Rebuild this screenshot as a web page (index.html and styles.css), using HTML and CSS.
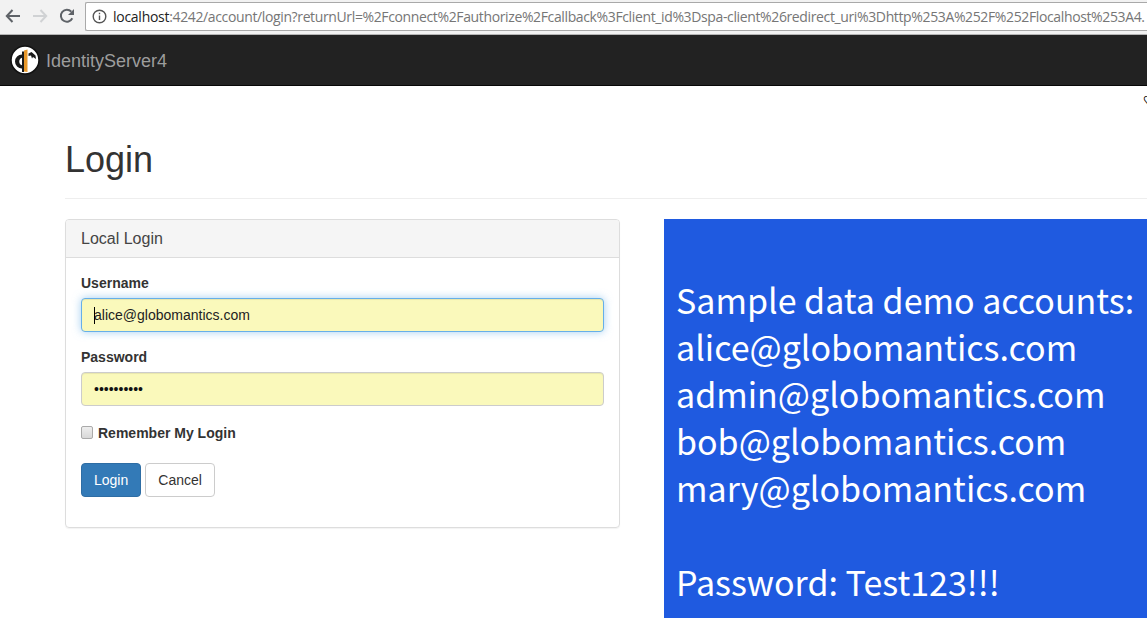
FILE: index.html
```html
<!DOCTYPE html>
<html lang="en">
<head>
<meta charset="utf-8">
<title>Login</title>
<link rel="stylesheet" href="styles.css">
</head>
<body>
<div class="chrome">
  <svg class="nav-icon" width="16" height="14" viewBox="0 0 16 14"><path d="M15 7H2M7.500 1 1.800 7l5.700 6" fill="none" stroke="#5f6368" stroke-width="2"/></svg>
  <svg class="nav-icon" width="16" height="14" viewBox="0 0 16 14"><path d="M1 7h13M8.500 1l5.700 6-5.700 6" fill="none" stroke="#d0d2d4" stroke-width="2"/></svg>
  <svg class="nav-icon" width="16" height="16" viewBox="0 0 16 16"><path d="M13.300 10.300A6 6 0 1 1 12.300 3.600" fill="none" stroke="#5f6368" stroke-width="2"/><path d="M15 1v6H9z" fill="#5f6368"/></svg>
  <div class="omnibox">
    <svg class="info" width="15" height="15" viewBox="0 0 15 15"><circle cx="7.500" cy="7.500" r="6.300" fill="none" stroke="#555" stroke-width="1.400"/><path d="M6.800 6.500h1.400v4.500H6.800zM6.800 3.800h1.400v1.500H6.800z" fill="#555"/></svg>
    <span class="url"><span class="host">localhost</span>:4242/account/login?returnUrl=%2Fconnect%2Fauthorize%2Fcallback%3Fclient_id%3Dspa-client%26redirect_uri%3Dhttp%253A%252F%252Flocalhost%253A4.</span>
  </div>
</div>
<nav class="navbar">
  <svg class="logo" width="30" height="30" viewBox="0 0 30 30"><circle cx="15" cy="15" r="14" fill="#fff" stroke="#111" stroke-width="1.500"/><path d="M14 5.500l3.500-1V27l-3.500-.5z" fill="#e8982a"/><path d="M12 6.500h2V27h-2z" fill="#1a1a1a"/><path d="M12 9.500v3.200a4 4 0 0 0 0 7.600v3.200a7 7 0 0 1 0-14z" fill="#1a1a1a"/><path d="M18.500 8.500l3-1.500 4 3.500.5 3.500-3-2-1 1.500-1-3-2.500.5z" fill="#1a1a1a"/></svg>
  <span class="brand">IdentityServer4</span>
</nav>
<main class="page">
  <div class="heart">♡</div>
  <h1 class="title">Login</h1>
  <div class="columns">
    <section class="panel">
      <h2 class="panel-head">Local Login</h2>
      <form class="panel-body">
        <label class="label" for="u">Username</label>
        <div class="input focus" id="u"><i class="caret"></i>alice@globomantics.com</div>
        <label class="label" for="p">Password</label>
        <div class="input" id="p"><span class="dots">••••••••••</span></div>
        <div class="remember"><span class="check"></span><span>Remember My Login</span></div>
        <div class="buttons"><span class="btn primary">Login</span><span class="btn">Cancel</span></div>
      </form>
    </section>
    <aside class="accounts">
      <p>Sample data demo accounts:</p>
      <p>alice@globomantics.com</p>
      <p>admin@globomantics.com</p>
      <p>bob@globomantics.com</p>
      <p>mary@globomantics.com</p>
      <p class="gap">Password: Test123!!!</p>
    </aside>
  </div>
</main>
</body>
</html>
```
FILE: styles.css
```css
* { box-sizing: border-box; }
html, body { margin: 0; height: 618px; overflow: hidden; background: #fff; }
body { font-family: "Liberation Sans", Arial, sans-serif; color: #333; }
.chrome { height: 35px; background: #f2f2f2; border-bottom: 1px solid #b5b5b5; display: flex; align-items: center; padding: 0 0 2px 5px; gap: 11px; overflow: hidden; }
.nav-icon { flex: none; }
.omnibox { flex: none; width: 1100px; height: 29px; margin-left: -1px; background: #fff; border: 1px solid #a9a9a9; border-right: 0; border-radius: 2px; display: flex; align-items: center; padding-left: 6px; white-space: nowrap; overflow: hidden; }
.info { flex: none; margin-right: 6px; }
.url { font: 14px "Open Sans", sans-serif; color: #767676; letter-spacing: -.37px; }
.host { color: #222; letter-spacing: -.27px; }
.navbar { height: 51px; background: #222; border-bottom: 1px solid #080808; display: flex; align-items: center; padding: 0 0 0 10px; gap: 6px; }
.brand { font-size: 18px; color: #9d9d9d; padding-top: 2px; }
.page { position: relative; padding: 0 0 0 65px; }
.heart { position: absolute; right: -7px; top: 8px; font-size: 12px; font-weight: 700; line-height: 14px; color: #000; }
.title { margin: 0; height: 113px; padding-top: 54px; border-bottom: 1px solid #eee; font-size: 36px; font-weight: 500; line-height: 40px; color: #333; }
.columns { display: flex; gap: 44px; margin-top: 20px; align-items: flex-start; }
.panel { flex: none; width: 555px; height: 309px; border: 1px solid #ddd; border-radius: 4px; box-shadow: 0 1px 1px rgba(0,0,0,.05); }
.panel-head { margin: 0; height: 38px; padding: 10px 15px; background: #f5f5f5; border-bottom: 1px solid #ddd; font-size: 16px; font-weight: 400; line-height: 18px; color: #444; border-radius: 3px 3px 0 0; }
.panel-body { padding: 15px 15px 0; }
.label { display: block; font-size: 14px; font-weight: 700; line-height: 20px; height: 20px; margin-bottom: 5px; }
.input { height: 34px; margin-bottom: 15px; padding: 0 12px; display: flex; align-items: center; position: relative; font-size: 14px; color: #222; background: #faf9bb; border: 1px solid #ccc; border-radius: 4px; box-shadow: inset 0 1px 1px rgba(0,0,0,.075); }
.focus { border-color: #66afe9; box-shadow: inset 0 1px 1px rgba(0,0,0,.075), 0 0 8px rgba(102,175,233,.6); }
.caret { position: absolute; left: 12px; top: 8px; width: 1px; height: 17px; background: #000; }
.dots { font-size: 14px; color: #111; }
.remember { display: flex; align-items: center; height: 20px; margin-top: 17px; font-size: 14px; font-weight: 700; gap: 5px; }
.check { width: 12px; height: 13px; border: 1px solid #aaa; border-radius: 2px; background: linear-gradient(#eee, #d8d8d8); margin-top: -2px; }
.buttons { display: flex; gap: 4px; margin-top: 20px; }
.btn { height: 34px; padding: 0 12px; font-size: 14px; line-height: 32px; color: #333; background: #fff; border: 1px solid #ccc; border-radius: 4px; }
.primary { color: #fff; background: #337ab7; border-color: #2e6da4; }
.accounts { flex: none; width: 483px; height: 399px; padding: 57px 13px 0 12px; background: #1f5ae0; color: #fff; font: 34px/47px "Noto Sans CJK JP", "Noto Sans", sans-serif; white-space: nowrap; overflow: hidden; }
.accounts p { margin: 0; }
.accounts .gap { margin-top: 47px; }
```
